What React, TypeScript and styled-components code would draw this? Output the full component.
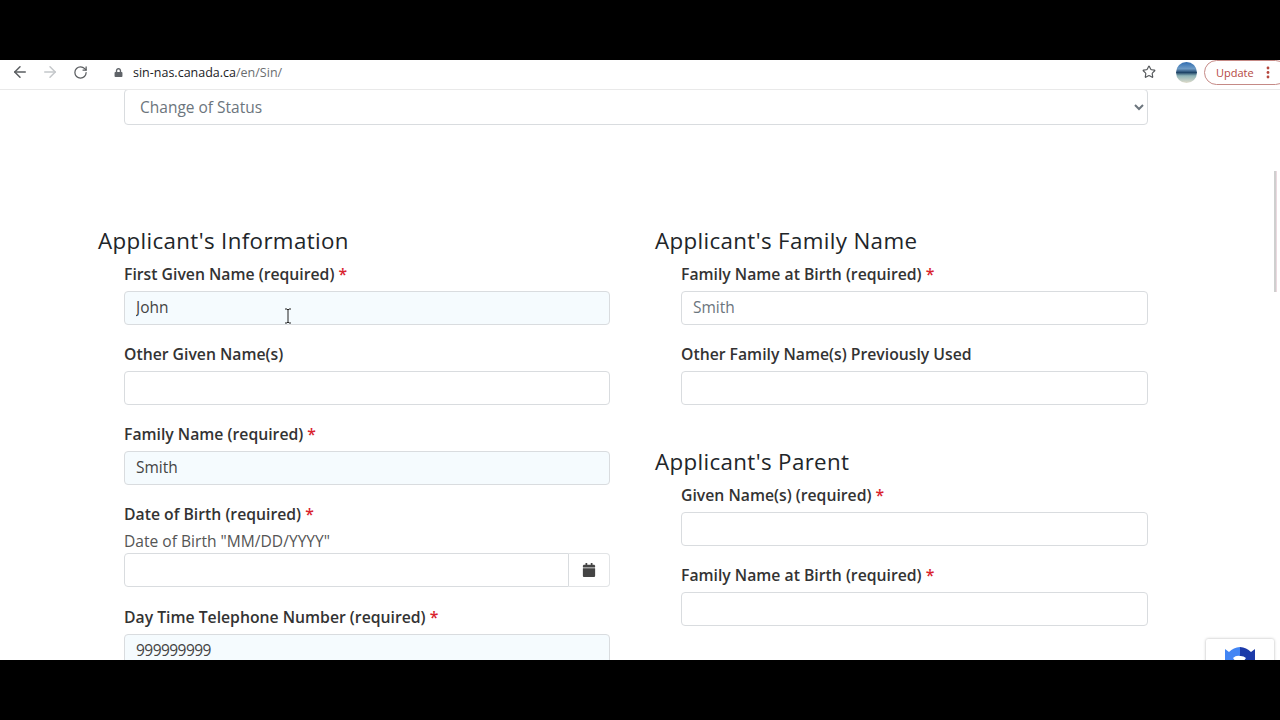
import * as React from 'react'
import styled, { createGlobalStyle } from 'styled-components'
import { ArrowLeft, ArrowRight, RotateCw, Star } from 'lucide-react'
import { FaCalendar, FaLock } from 'react-icons/fa'

const GlobalStyle = createGlobalStyle`
    html, body {
        margin: 0;
        padding: 0;
        width: 1280px;
        height: 720px;
        overflow: hidden;
        background: #000;
        font-family: "Open Sans", "Noto Sans", sans-serif;
    }
`

const Screen = styled.div`
    width: 1280px;
    height: 720px;
    display: flex;
    flex-direction: column;
    background: #000;
`

const Letterbox = styled.div`
    height: 60px;
    flex: none;
    background: #000;
`

const Toolbar = styled.div`
    height: 30px;
    flex: none;
    display: flex;
    align-items: center;
    padding: 0 0 5px 12px;
    background: #fff;
    overflow: hidden;
    box-sizing: border-box;
    border-bottom: 1px solid #e9e9e9;
`

const NavButton = styled.span<{ $dim?: boolean }>`
    width: 16px;
    height: 16px;
    margin-right: 14px;
    display: flex;
    align-items: center;
    justify-content: center;
    color: ${props => props.$dim ? '#c4c7ca' : '#5a5d60'};

    svg {
        flex: none;
    }
`

const LockIcon = styled.span`
    margin-left: 12px;
    width: 9px;
    display: flex;
    font-size: 9px;
    color: #5f6368;
`

const Address = styled.span`
    margin-left: 10px;
    font-size: 12.5px;
    color: #202124;
    flex: 1;
`

const AddressPath = styled.span`
    color: #6a6d70;
`

const Avatar = styled.span`
    width: 21px;
    height: 21px;
    margin-left: 20px;
    border-radius: 50%;
    background: linear-gradient(180deg, #2f6cb0 0%, #6f9cc6 32%, #1f4568 50%, #8fb5b8 66%, #e0dccb 100%);
`

const UpdatePill = styled.span`
    width: 84px;
    height: 25px;
    margin: 0 -8px 0 7px;
    flex: none;
    box-sizing: border-box;
    padding-left: 11px;
    display: flex;
    align-items: center;
    border: 1px solid #c58a86;
    border-radius: 13px;
    font-size: 11px;
    color: #b5483f;
`

const MenuDots = styled.svg`
    margin-left: 12px;
`

const Viewport = styled.div`
    height: 570px;
    flex: none;
    position: relative;
    overflow: hidden;
    background: #fff;
`

const StatusSelect = styled.select`
    display: block;
    width: 1024px;
    height: 36px;
    margin: -1px 0 0 124px;
    padding: 0 11px;
    box-sizing: border-box;
    border: 1px solid #d9dcdf;
    border-radius: 4px;
    background: #fff;
    font-family: inherit;
    font-size: 15.5px;
    color: #6c757d;
`

const Columns = styled.div`
    margin: 99px 0 0 98px;
    width: 1050px;
    display: grid;
    grid-template-columns: 512px 493px;
    column-gap: 45px;
`

const Section = styled.section`
    margin-bottom: 40px;
`

const Heading = styled.h2`
    margin: 0 0 4px;
    height: 34px;
    font-size: 22.35px;
    line-height: 34px;
    font-weight: 400;
    letter-spacing: 0.35px;
    color: #212529;
`

const Field = styled.div`
    margin: 0 0 17px 26px;
`

const Label = styled.label`
    display: block;
    height: 24px;
    font-size: 15.75px;
    line-height: 24px;
    font-weight: 600;
    color: #333;
`

const Required = styled.span`
    color: #d9232e;
`

const Hint = styled.div`
    height: 24px;
    margin-top: 3px;
    font-size: 15.6px;
    line-height: 24px;
    color: #555;
`

const Input = styled.input<{ $filled?: boolean; $numeric?: boolean }>`
    display: block;
    width: 100%;
    height: 34px;
    margin-top: 5px;
    padding: 0 11px 2px;
    box-sizing: border-box;
    border: 1px solid #d9dcdf;
    border-radius: 4px;
    outline: none;
    background: ${props => props.$filled ? '#f5fbfe' : '#fff'};
    font-family: inherit;
    font-size: 15.5px;
    letter-spacing: ${props => props.$numeric ? '-0.55px' : '0'};
    color: ${props => props.$filled ? '#444' : '#6c757d'};
`

const InputGroup = styled.div`
    display: flex;
    height: 34px;
    margin-bottom: 18px;
`

const GroupInput = styled.input`
    flex: 1;
    min-width: 0;
    box-sizing: border-box;
    border: 1px solid #d9dcdf;
    border-radius: 4px 0 0 4px;
    outline: none;
    background: #fff;
`

const GroupAddon = styled.span`
    width: 41px;
    box-sizing: border-box;
    display: flex;
    align-items: center;
    justify-content: center;
    border: 1px solid #e2e4e6;
    border-left: none;
    border-radius: 0 4px 4px 0;
    font-size: 14px;
    color: #444;
`

const ScrollThumb = styled.div`
    position: absolute;
    left: 1274px;
    top: 81px;
    width: 3px;
    height: 121px;
    border-left: 2px solid #cfcfcf;
    border-right: 1px solid #ead9df;
    box-sizing: border-box;
`

const TextCursor = styled.svg`
    position: absolute;
    left: 284px;
    top: 218px;
`

const RecaptchaBadge = styled.div`
    position: absolute;
    left: 1206px;
    top: 549px;
    width: 68px;
    height: 40px;
    display: flex;
    justify-content: center;
    padding-top: 7px;
    box-sizing: border-box;
    background: #fff;
    border-radius: 2px;
    box-shadow: 0 0 3px rgba(0, 0, 0, 0.3);
`

interface IFieldProps {
    label: string
    required?: boolean
    value?: string
    filled?: boolean
    numeric?: boolean
}

const FormField = ({ label, required, value, filled, numeric }: IFieldProps) => (
    <Field>
        <Label>
            {label}{required && <Required> *</Required>}
        </Label>
        <Input $filled={filled} $numeric={numeric} value={value || ''} readOnly />
    </Field>
)

export default function App() {
    return (
        <Screen>
            <GlobalStyle />
            <Letterbox />
            <Toolbar>
                <NavButton><ArrowLeft size={18} strokeWidth={2} /></NavButton>
                <NavButton $dim><ArrowRight size={18} strokeWidth={2} /></NavButton>
                <NavButton><RotateCw size={15} strokeWidth={2} /></NavButton>
                <LockIcon><FaLock /></LockIcon>
                <Address>sin-nas.canada.ca<AddressPath>/en/Sin/</AddressPath></Address>
                <Star size={14} strokeWidth={2} color="#55585b" />
                <Avatar />
                <UpdatePill>
                    Update
                    <MenuDots width="4" height="13" viewBox="0 0 4 13">
                        <circle cx="2" cy="2" r="1.4" fill="#b5483f" />
                        <circle cx="2" cy="6.5" r="1.4" fill="#b5483f" />
                        <circle cx="2" cy="11" r="1.4" fill="#b5483f" />
                    </MenuDots>
                </UpdatePill>
            </Toolbar>
            <Viewport>
                <StatusSelect defaultValue="status">
                    <option value="status">Change of Status</option>
                </StatusSelect>
                <Columns>
                    <div>
                        <Section>
                            <Heading>Applicant's Information</Heading>
                            <FormField label="First Given Name (required)" required value="John" filled />
                            <FormField label="Other Given Name(s)" />
                            <FormField label="Family Name (required)" required value="Smith" filled />
                            <Field>
                                <Label>Date of Birth (required)<Required> *</Required></Label>
                                <Hint>Date of Birth "MM/DD/YYYY"</Hint>
                                <InputGroup>
                                    <GroupInput readOnly />
                                    <GroupAddon><FaCalendar /></GroupAddon>
                                </InputGroup>
                            </Field>
                            <FormField label="Day Time Telephone Number (required)" required value="999999999" filled numeric />
                        </Section>
                    </div>
                    <div>
                        <Section>
                            <Heading>Applicant's Family Name</Heading>
                            <FormField label="Family Name at Birth (required)" required value="Smith" />
                            <FormField label="Other Family Name(s) Previously Used" />
                        </Section>
                        <Section>
                            <Heading>Applicant's Parent</Heading>
                            <FormField label="Given Name(s) (required)" required />
                            <FormField label="Family Name at Birth (required)" required />
                        </Section>
                    </div>
                </Columns>
                <ScrollThumb />
                <TextCursor width="8" height="16" viewBox="0 0 8 16">
                    <path d="M1 1h2l1 1 1-1h2M4 2v12M1 15h2l1-1 1 1h2" fill="none" stroke="#222" strokeWidth="1" />
                </TextCursor>
                <RecaptchaBadge>
                    <svg width="34" height="34" viewBox="0 0 34 34">
                        <path d="M17 1a16 16 0 0 1 11 5l4-3v13H20l3-4a8 8 0 0 0-6-2z" fill="#1c3aa9" />
                        <path d="M17 1A16 16 0 0 0 6 6L2 3v13h11l-3-4a8 8 0 0 1 7-2z" fill="#4285f4" />
                    </svg>
                </RecaptchaBadge>
            </Viewport>
            <Letterbox />
        </Screen>
    )
}
